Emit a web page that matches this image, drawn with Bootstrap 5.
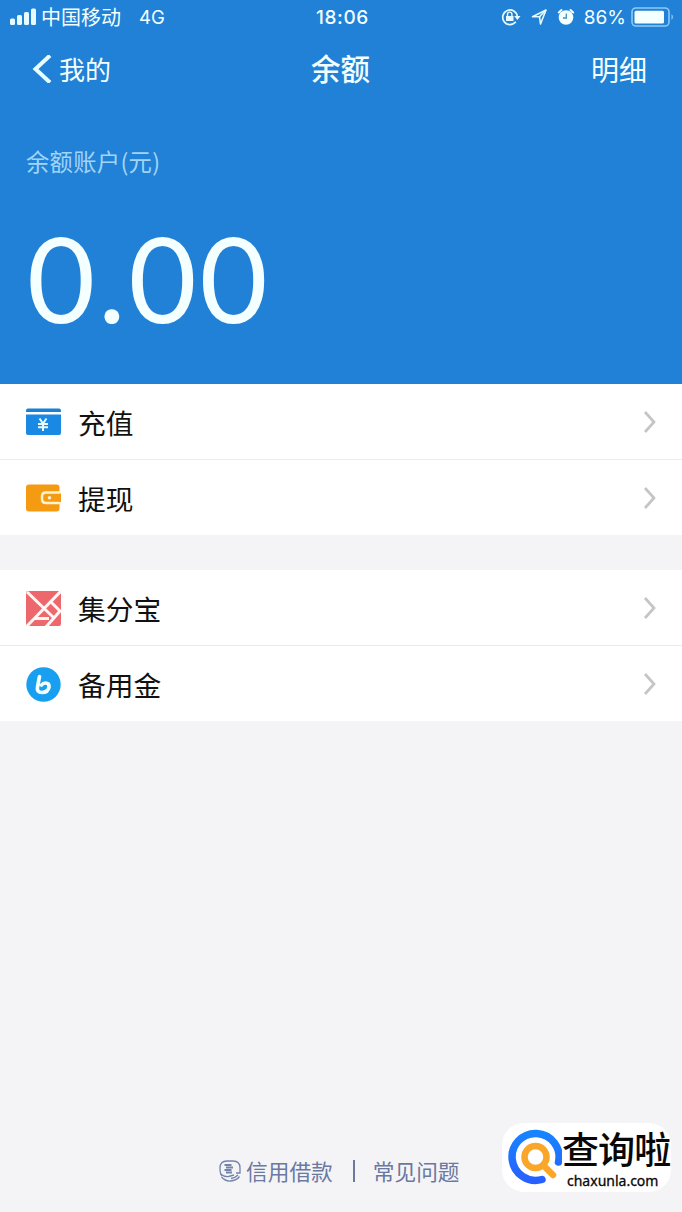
<!DOCTYPE html>
<html lang="zh-CN">
<head>
<meta charset="utf-8">
<meta name="viewport" content="width=device-width, initial-scale=1">
<title>余额</title>
<link href="https://cdn.jsdelivr.net/npm/bootstrap@5.3.0/dist/css/bootstrap.min.css" rel="stylesheet">
<style>
body{background:#f4f4f7;font-family:"Liberation Sans","Noto Sans CJK SC",sans-serif;color:#111;height:1212px;overflow:hidden}
svg{display:block;flex:none}
.cjk{font-family:"Noto Sans CJK SC",sans-serif}
.hero{background:#2081d7;height:384px;color:#f4ffff}
.status{height:34px;font-size:20px;line-height:34px;padding:0 8px 0 9px}
.status .clock{font:500 19px/34px Inter,sans-serif;letter-spacing:.6px;padding-top:1px;margin-left:2px}
.status .net{font:400 18.5px/36px Inter,sans-serif;margin-left:18px}
.status .pct{font:400 19px/34px Inter,sans-serif;padding-top:1px;margin:0 5px 0 9px}
.titlebar{height:70px;font-size:26px;line-height:70px;padding:0 35px 0 32px}
.titlebar .name{font-size:29.5px;font-weight:500;line-height:66px;padding-bottom:4px;margin-left:2px}
.side{flex:1 1 0}
.label{font-size:23.3px;line-height:34px;margin:40px 0 0 26px;color:#a0d5f8;font-weight:400;letter-spacing:.3px}
.amount{font:400 117.5px/130px Lato,sans-serif;letter-spacing:2.8px;margin:35px 0 0 27px}
.list-group-item.entry{height:75.5px;padding:2px 26px 0;border:0;border-bottom:1.500px solid #ececef;font-size:27.7px;color:#111;background:#fff}
.entry .text{margin-left:17px;line-height:73px}
.gap{height:35px}
.foot{margin-top:432px;height:38px;color:#69799f;font-size:21.7px;line-height:34px;padding:0 0 2px 219px}
.bar{width:2px;height:22px;background:#69799f;margin:0 18px 0 20px}
.brand{right:11px;top:1123px;width:169px;height:69px;border-radius:22px;background:#fff;color:#080808}
.brand .zh{font:500 37px/41px "Noto Sans CJK SC",sans-serif;letter-spacing:-.9px;margin-top:5px}
.brand .url{font:400 14px/23px "Noto Sans",sans-serif;margin-left:5px;-webkit-text-stroke:.3px #080808}
</style>
</head>
<body>
<header class="hero d-flex flex-column">
  <div class="status d-flex align-items-center">
    <div class="side d-flex align-items-center">
      <svg width="28" height="18" viewBox="0 0 28 18" fill="#e6fbff"><rect x="1" y="10.500" width="5" height="6.500" rx="1.5"/><rect x="8" y="7" width="5" height="10" rx="1.5"/><rect x="15" y="4" width="5" height="13" rx="1.500"/><rect x="22" y="0.500" width="5" height="16.500" rx="1.500"/></svg>
      <span class="cjk ms-1">中国移动</span><span class="net">4G</span>
    </div>
    <span class="clock">18:06</span>
    <div class="side d-flex align-items-center justify-content-end">
      <svg width="20" height="18" viewBox="0 0 20 18" fill="none" stroke="#e6fbff" stroke-width="1.700"><path d="M14.800 13.800A7.300 7.300 0 1 1 16.300 8.500"/><path d="M13.200 8h6.300l-3.100 4z" fill="#e6fbff" stroke="none"/><rect x="5" y="8" width="7.500" height="5" fill="#e6fbff" stroke="none"/><path d="M6.500 8V6.300a2.200 2.200 0 0 1 4.400 0V8" stroke-width="1.400"/></svg>
      <svg class="ms-2" width="20" height="18" viewBox="0 0 20 18" fill="none" stroke="#e6fbff" stroke-width="1.600" stroke-linejoin="round"><path d="M3.500 8.700 17 2l-5.500 14-1-7.300z"/><path d="M10.500 8.700 17 2"/></svg>
      <svg width="18" height="18" viewBox="0 0 18 18" style="margin-left:8px"><circle cx="9" cy="9.500" r="7.300" fill="#f4ffff"/><path d="M1.800 4.500 4.500 2M16.200 4.500 13.500 2" stroke="#f4ffff" stroke-width="2" stroke-linecap="round"/><path d="M9.300 5.500V10H6" fill="none" stroke="#4590ba" stroke-width="1.300"/></svg>
      <span class="pct">86%</span>
      <svg width="43" height="20" viewBox="0 0 43 20"><rect x="1" y="1" width="37" height="18" rx="4" fill="none" stroke="#8bcaf5" stroke-width="1.600"/><rect x="3.500" y="3.700" width="29.500" height="12.800" rx="1.500" fill="#f4ffff"/><path d="M40.500 7q3 3 0 6z" fill="#8bcaf5"/></svg>
    </div>
  </div>
  <nav class="titlebar cjk d-flex align-items-center">
    <div class="side d-flex align-items-center"><svg width="20" height="28" viewBox="0 0 20 28"><path d="M18 .5 3.500 14 18 27.500" fill="none" stroke="#e8fdff" stroke-width="4"/></svg><span style="margin-left:7px">我的</span></div>
    <span class="name">余额</span>
    <div class="side text-end" style="font-size:28px">明细</div>
  </nav>
  <div class="label cjk">余额账户(元)</div>
  <div class="amount">0.00</div>
</header>

<main>
  <div class="list-group list-group-flush cjk">
    <a class="list-group-item entry d-flex align-items-center text-decoration-none" href="#">
      <svg width="35" height="28" viewBox="0 0 35 28"><path d="M0 4V2.500Q0 .5 2 .5h31q2 0 2 2V4z" fill="#1a80d5"/><path d="M0 6.500h35v18.500q0 2-2 2H2q-2 0-2-2z" fill="#1989e4"/><path d="m13.500 10.500 3.500 5 3.500-5M12 16h10M12 19.300h10M17 15.500v7.500" fill="none" stroke="#e8fbff" stroke-width="2"/></svg>
      <span class="text">充值</span><svg class="ms-auto" width="16" height="26" viewBox="0 0 16 26"><path d="m5 3 9 10-9 10" fill="none" stroke="#c5c5c7" stroke-width="2.700"/></svg>
    </a>
    <a class="list-group-item entry d-flex align-items-center text-decoration-none" href="#">
      <svg width="35" height="28" viewBox="0 0 35 28"><rect y=".5" width="33.500" height="27" rx="3" fill="#f49b12"/><path d="M35 8.500H20q-4 0-4 4v2.500q0 4 4 4h15" fill="#f49b12" stroke="#fff3cf" stroke-width="2.500"/><path d="M33 9.700h2v8.100h-2z" fill="#f49b12"/><circle cx="23.500" cy="13.800" r="1.800" fill="#fff3cf"/></svg>
      <span class="text">提现</span><svg class="ms-auto" width="16" height="26" viewBox="0 0 16 26"><path d="m5 3 9 10-9 10" fill="none" stroke="#c5c5c7" stroke-width="2.700"/></svg>
    </a>
  </div>
  <div class="gap"></div>
  <div class="list-group list-group-flush cjk">
    <a class="list-group-item entry d-flex align-items-center text-decoration-none" href="#">
      <svg width="35" height="35" viewBox="0 0 35 35"><rect width="35" height="35" rx="2" fill="#ed686d"/><path d="M1 1 27 26M35 0 1 35M25 11l9 9-14 16M8 27.500h15" fill="none" stroke="#fff5f2" stroke-width="3"/></svg>
      <span class="text">集分宝</span><svg class="ms-auto" width="16" height="26" viewBox="0 0 16 26"><path d="m5 3 9 10-9 10" fill="none" stroke="#c5c5c7" stroke-width="2.700"/></svg>
    </a>
    <a class="list-group-item entry d-flex align-items-center text-decoration-none" href="#">
      <svg width="35" height="35" viewBox="0 0 35 35"><circle cx="17.500" cy="17.500" r="17.200" fill="#189ff0"/><path d="M13.500 9.500 11.500 20q-1 5.500 4.500 5.500 6 0 7-5.300.5-4.200-3.500-4.200-2.500 0-4 2" fill="none" stroke="#f3ffff" stroke-width="3.700" stroke-linecap="round" stroke-linejoin="round"/></svg>
      <span class="text">备用金</span><svg class="ms-auto" width="16" height="26" viewBox="0 0 16 26"><path d="m5 3 9 10-9 10" fill="none" stroke="#c5c5c7" stroke-width="2.700"/></svg>
    </a>
  </div>
</main>

<footer class="foot cjk d-flex align-items-center">
  <svg width="23" height="23" viewBox="0 0 23 23" fill="none" stroke="#7483aa" stroke-width="1.300"><path d="M3 16Q1 14 1 8q0-7 7-7h6q7 0 7 7v5h-4"/><path d="M5.500 5h7M7 7.500h7M5.500 10h7M7 12.500h6" stroke-width="2.200"/><path d="M1.500 14q3.500 3 8 2.500L15 15M2.500 17q4 4.500 9 4 6-.5 9-4.500M12 18.500q4-.5 7-3.500"/></svg>
  <span style="margin-left:4px">信用借款</span><span class="bar"></span><span>常见问题</span>
</footer>

<div class="brand position-absolute d-flex">
  <svg width="60" height="69" viewBox="0 0 60 69" fill="none" stroke-linecap="round"><defs><linearGradient id="ring" x1="0" y1="0" x2="0" y2="1"><stop stop-color="#1784ff"/><stop offset="1" stop-color="#2860ff"/></linearGradient></defs><path d="M40 56.500A23.500 23.500 0 1 1 56.500 39" stroke="url(#ring)" stroke-width="7.500"/><circle cx="33.500" cy="34" r="11" stroke="#f9a62b" stroke-width="6.500"/><path d="m42 43 9 9" stroke="#f9a62b" stroke-width="6.500"/></svg>
  <div><div class="zh">查询啦</div><div class="url">chaxunla.com</div></div>
</div>
<script src="https://cdn.jsdelivr.net/npm/bootstrap@5.3.0/dist/js/bootstrap.bundle.min.js"></script>
</body>
</html>
